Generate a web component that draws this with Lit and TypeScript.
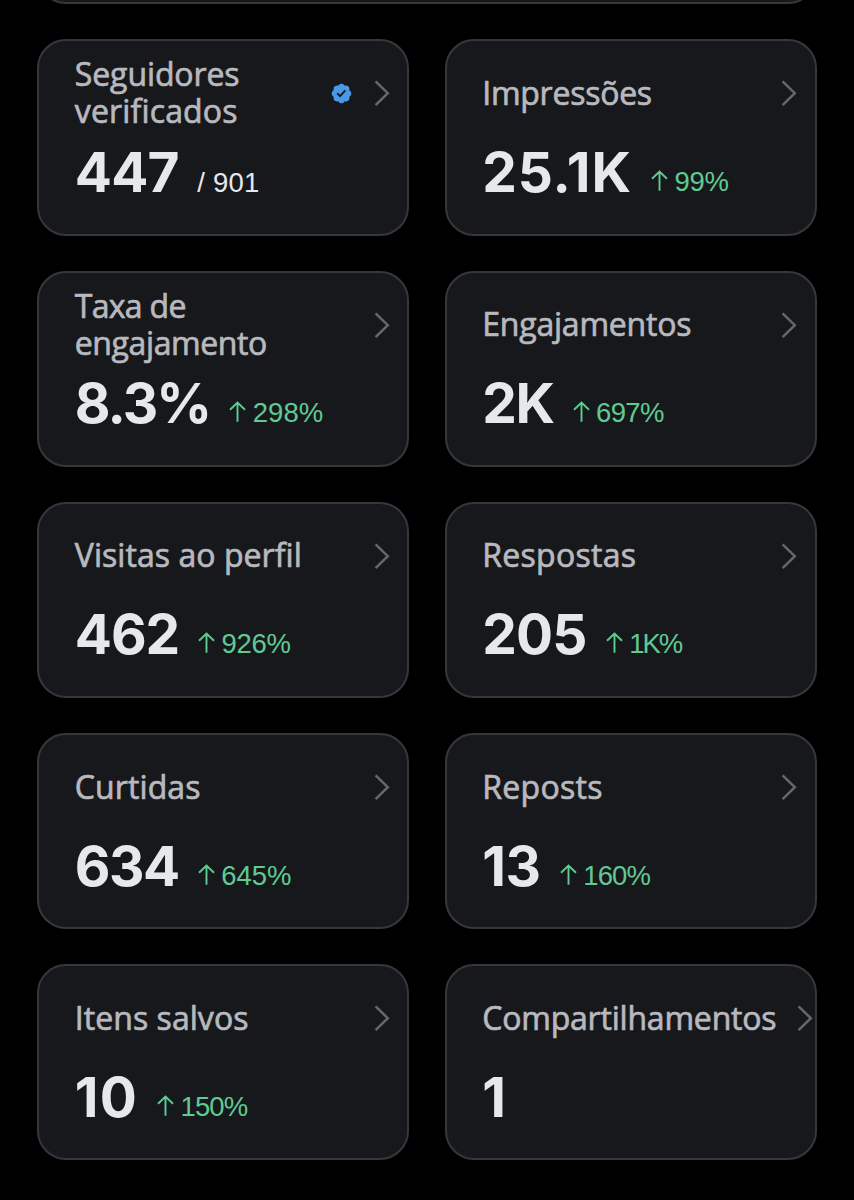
import { LitElement, html, css, svg, nothing } from "lit";
import { customElement, property } from "lit/decorators.js";
import { styleMap } from "lit/directives/style-map.js";

interface Line {
  text: string;
  track: number;
}

interface Metric {
  label: Line[];
  value: Line;
  delta?: Line;
  total?: Line;
  verified?: boolean;
}

const METRICS: Metric[] = [
  {
    label: [{ text: "Seguidores", track: -0.1 }, { text: "verificados", track: 0.15 }],
    value: { text: "447", track: -0.8 },
    total: { text: "/ 901", track: 0.2 },
    verified: true,
  },
  {
    label: [{ text: "Impressões", track: -0.25 }],
    value: { text: "25.1K", track: 0.9 },
    delta: { text: "99%", track: -0.3 },
  },
  {
    label: [{ text: "Taxa de", track: -0.7 }, { text: "engajamento", track: -0.4 }],
    value: { text: "8.3%", track: -1.9 },
    delta: { text: "298%", track: 0 },
  },
  {
    label: [{ text: "Engajamentos", track: -0.2 }],
    value: { text: "2K", track: -1.4 },
    delta: { text: "697%", track: -0.7 },
  },
  {
    label: [{ text: "Visitas ao perfil", track: 0.05 }],
    value: { text: "462", track: -1.1 },
    delta: { text: "926%", track: -0.3 },
  },
  {
    label: [{ text: "Respostas", track: 0.3 }],
    value: { text: "205", track: -0.8 },
    delta: { text: "1K%", track: -2 },
  },
  {
    label: [{ text: "Curtidas", track: 0.1 }],
    value: { text: "634", track: -1.5 },
    delta: { text: "645%", track: 0 },
  },
  {
    label: [{ text: "Reposts", track: 0.3 }],
    value: { text: "13", track: -0.3 },
    delta: { text: "160%", track: -0.9 },
  },
  {
    label: [{ text: "Itens salvos", track: 0.05 }],
    value: { text: "10", track: 1.2 },
    delta: { text: "150%", track: -0.9 },
  },
  {
    label: [{ text: "Compartilhamentos", track: -0.2 }],
    value: { text: "1", track: 0 },
  },
];

const BADGE = svg`<path fill="currentColor" d="M20.396 11c-.018-.646-.215-1.275-.57-1.816-.354-.54-.852-.972-1.438-1.246.223-.607.27-1.264.14-1.897-.131-.634-.437-1.218-.882-1.687-.47-.445-1.053-.75-1.687-.882-.633-.13-1.29-.083-1.897.14-.273-.587-.704-1.086-1.245-1.44S11.647 1.62 11 1.604c-.646.017-1.273.213-1.813.568s-.969.854-1.24 1.44c-.608-.223-1.267-.272-1.902-.14-.635.13-1.22.436-1.69.882-.445.47-.749 1.055-.878 1.688-.13.633-.08 1.29.144 1.896-.587.274-1.087.705-1.443 1.245-.356.54-.555 1.17-.574 1.817.02.647.218 1.276.574 1.817.356.54.856.972 1.443 1.245-.224.606-.274 1.263-.144 1.896.13.634.433 1.218.877 1.688.47.443 1.054.747 1.687.878.633.132 1.29.084 1.897-.136.274.586.705 1.084 1.246 1.439.54.354 1.17.551 1.816.569.647-.016 1.276-.213 1.817-.567s.972-.854 1.245-1.44c.604.239 1.266.296 1.903.164.636-.132 1.22-.447 1.68-.907.46-.46.776-1.044.908-1.681s.075-1.299-.165-1.903c.586-.274 1.084-.705 1.439-1.246.354-.54.551-1.17.569-1.816zM9.662 14.85l-3.429-3.428 1.293-1.302 2.072 2.072 4.4-4.794 1.347 1.246z"/>`;

@customElement("metric-card")
export class MetricCard extends LitElement {
  @property({ attribute: false }) metric!: Metric;

  static styles = css`
    :host {
      display: block;
      box-sizing: border-box;
      min-width: 0;
      border: 2px solid #36373b;
      border-radius: 29px;
      background: #17181c;
      padding: 12px 17.5px 0 35.5px;
    }
    .head {
      display: flex;
      align-items: center;
      height: 80px;
    }
    .label {
      flex: 1 0 auto;
      padding-bottom: 2px;
      font: 400 32px/37px "Open Sans", sans-serif;
      color: #b8b9be;
      -webkit-text-stroke: 0.7px #b8b9be;
    }
    .line {
      display: block;
      white-space: nowrap;
    }
    .badge {
      width: 23px;
      height: 23px;
      flex: none;
      color: #4a99e9;
    }
    .chevron {
      width: 16px;
      height: 26px;
      flex: none;
      margin-left: 20.5px;
    }
    .stats {
      display: flex;
      align-items: baseline;
      margin-top: 11.5px;
      white-space: nowrap;
    }
    .value {
      font: 700 55px/55px Inter, sans-serif;
      color: #e7e8ea;
    }
    .small {
      font: 400 27.5px/30px "Liberation Sans", sans-serif;
    }
    .total {
      margin-left: 18.5px;
      color: #e7e8ea;
    }
    .delta {
      display: flex;
      align-items: baseline;
      margin-left: 19px;
      color: #5fca92;
      transform: translateY(-1px);
    }
    .arrow {
      width: 17px;
      height: 21px;
      margin: 0 6.5px -1px 0;
    }
  `;

  private line(l: Line, cls: string) {
    return html`<span class=${cls} style=${styleMap({ letterSpacing: `${l.track}px` })}>${l.text}</span>`;
  }

  render() {
    const m = this.metric;
    return html`
      <div class="head">
        <div class="label">${m.label.map((l) => this.line(l, "line"))}</div>
        ${m.verified ? html`<svg class="badge" viewBox="0 0 22 22">${BADGE}</svg>` : nothing}
        <svg class="chevron" viewBox="0 0 16 26" fill="none" stroke="#66676b" stroke-width="2.5">
          <path d="M1.6 1.3 L13.8 13.2 L1.6 25.1" />
        </svg>
      </div>
      <div class="stats">
        ${this.line(m.value, "value")}
        ${m.total ? this.line(m.total, "small total") : nothing}
        ${m.delta
          ? html`<span class="small delta">
              <svg class="arrow" viewBox="0 0 17 21" fill="none" stroke="currentColor" stroke-width="1.9">
                <path d="M1 8.8 L8.5 1.5 L16 8.8 M8.5 1.8 V20.8" />
              </svg>
              ${this.line(m.delta, "amount")}
            </span>`
          : nothing}
      </div>
    `;
  }
}

@customElement("app-root")
export class AppRoot extends LitElement {
  static styles = css`
    :host {
      display: flex;
      flex-direction: column;
      justify-content: flex-end;
      box-sizing: border-box;
      height: 1200px;
      overflow: hidden;
      padding: 0 37.2px 39.6px 37.3px;
      background: #000;
    }
    .overview {
      flex: none;
      box-sizing: border-box;
      height: 196px;
      margin-bottom: 35.4px;
      border: 2px solid #36373b;
      border-radius: 29px;
      background: #17181c;
    }
    .grid {
      flex: none;
      display: grid;
      grid-template-columns: 1fr 1fr;
      grid-auto-rows: 196.2px;
      gap: 35px 35.3px;
    }
  `;

  render() {
    return html`
      <div class="overview"></div>
      <div class="grid">
        ${METRICS.map((m) => html`<metric-card .metric=${m}></metric-card>`)}
      </div>
    `;
  }
}
